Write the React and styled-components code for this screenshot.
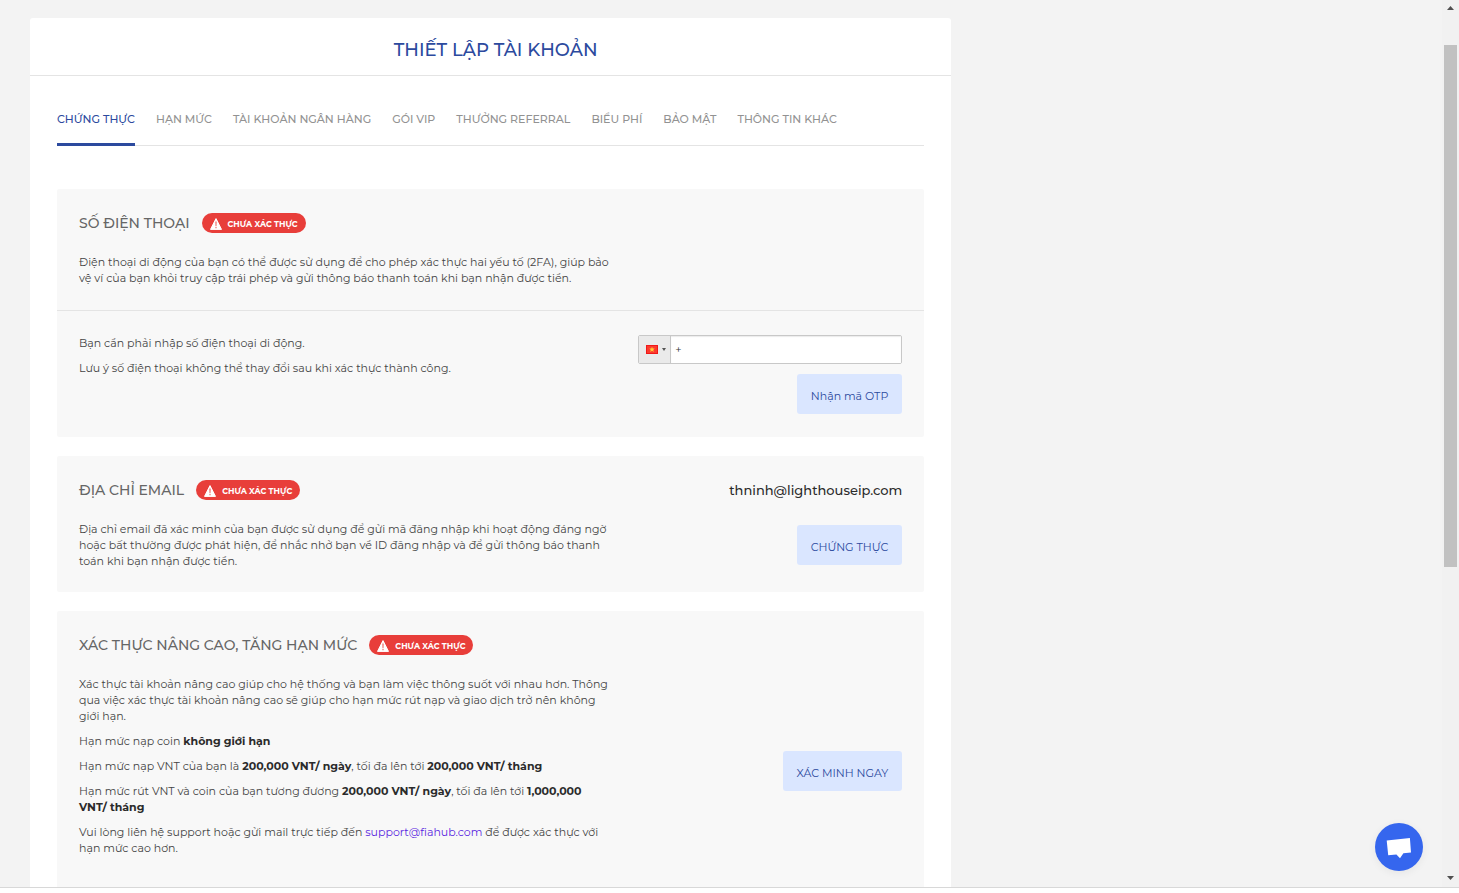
import React, { useState } from "react"
import styled, { createGlobalStyle, css } from "styled-components"

const COLORS = {
  primary: "#2c4a9e",
  danger: "#e83e3a",
  text: "#444",
  strong: "#2b2b2b",
  muted: "#929292",
  heading: "#666",
  page: "#f3f3f3",
  panel: "#f8f8f8",
  line: "#e4e4e4",
  button: "#dae6ff",
  chat: "#3566ee",
}

const TABS = [
  "CHỨNG THỰC",
  "HẠN MỨC",
  "TÀI KHOẢN NGÂN HÀNG",
  "GÓI VIP",
  "THƯỞNG REFERRAL",
  "BIỂU PHÍ",
  "BẢO MẬT",
  "THÔNG TIN KHÁC",
]

const GlobalStyle = createGlobalStyle`
  *,
  *::before,
  *::after {
    box-sizing: border-box;
  }

  body {
    margin: 0;
    background: #fff;
    color: ${COLORS.text};
    font-family: Montserrat, Inter, "Open Sans", sans-serif;
    font-size: 11px;
    line-height: 16px;
  }

  button,
  input,
  select {
    font: inherit;
  }
`

const Frame = styled.div`
  display: flex;
  height: calc(100vh - 5px);
  border-bottom: 1px solid #d8d8d8;
  background: ${COLORS.page};
`

const Viewport = styled.main`
  position: relative;
  flex: 1;
  min-width: 0;
  overflow: hidden;
`

const Column = styled.div`
  width: 66.6667%;
  padding: 18px 10px 0 30px;
`

const Card = styled.section`
  padding-bottom: 27px;
  border-radius: 3px;
  background: #fff;
`

const CardTitle = styled.h1`
  margin: 0;
  padding: 22px 0 15px 10px;
  border-bottom: 1px solid ${COLORS.line};
  color: ${COLORS.primary};
  font-size: 18px;
  font-weight: 500;
  line-height: 20px;
  text-align: center;
`

const CardBody = styled.div`
  padding: 27px 27px 0;
`

const TabList = styled.nav`
  display: flex;
  gap: 21px;
  margin-bottom: 43px;
  box-shadow: inset 0 -1px 0 ${COLORS.line};
`

const Tab = styled.button`
  padding: 8px 0 16px;
  height: 43px;
  border: 0;
  border-bottom: 3px solid transparent;
  background: none;
  color: ${COLORS.muted};
  font-weight: 500;
  white-space: nowrap;
  cursor: pointer;

  ${({ $active }) =>
    $active &&
    css`
      border-color: ${COLORS.primary};
      color: ${COLORS.primary};
    `}
`

const Panel = styled.article`
  margin-bottom: 19px;
  border-radius: 2px;
  background: ${COLORS.panel};
`

const PanelRow = styled.div`
  display: grid;
  grid-template-columns: minmax(0, 1fr) 264px;
  gap: 27px;
  padding: 24px 22px 23px;

  ${({ $divided }) =>
    $divided &&
    css`
      padding-bottom: 24px;
      border-bottom: 1px solid ${COLORS.line};
    `}

  ${({ $tall }) =>
    $tall &&
    css`
      min-height: 318px;
    `}
`

const Heading = styled.div`
  display: flex;
  align-items: center;
  gap: 12px;
  margin-bottom: 21px;

  h2 {
    margin: 0;
    color: ${COLORS.heading};
    font-size: 14px;
    font-weight: 500;
    line-height: 20px;
    white-space: nowrap;
  }
`

const Badge = styled.span`
  display: flex;
  align-items: center;
  gap: 6px;
  height: 20px;
  padding: 2px 8px 0;
  border-radius: 10px;
  background: ${COLORS.danger};
  color: #fff;
  font-size: 8px;
  font-weight: 700;
  white-space: nowrap;
`

const Text = styled.p`
  margin: 0;
  font-weight: 400;

  & + & {
    margin-top: 9px;
  }

  b {
    color: ${COLORS.strong};
    font-weight: 700;
  }

  a {
    color: #5a1fe0;
    text-decoration: none;
  }
`

const Aside = styled.div`
  display: flex;
  flex-direction: column;
  align-items: flex-end;
  justify-content: ${({ $center }) => ($center ? "center" : "flex-start")};
  gap: ${({ $gap }) => $gap || 0}px;
`

const Email = styled.strong`
  color: ${COLORS.strong};
  font-size: 13px;
  font-weight: 500;
  line-height: 20px;
`

const ActionButton = styled.button`
  height: 40px;
  padding: 4px 14px 0;
  border: 0;
  border-radius: 3px;
  background: ${COLORS.button};
  color: ${COLORS.primary};
  font-weight: 400;
  cursor: pointer;
`

const PhoneField = styled.div`
  display: flex;
  width: 100%;
  height: 29px;
  border: 1px solid #c8c8c8;
  border-radius: 2px;
  background: #fff;
  overflow: hidden;

  input {
    flex: 1;
    min-width: 0;
    padding: 0 4px 2px;
    border: 0;
    outline: 0;
    background: #fff;
    box-shadow: inset 0 1px 1px rgba(0, 0, 0, 0.08);
    color: #333;
    font-size: 11px;
  }
`

const Country = styled.div`
  position: relative;
  display: flex;
  align-items: center;
  gap: 4px;
  width: 32px;
  padding-left: 7px;
  border-right: 1px solid #c8c8c8;
  background: #eaeaea;

  select {
    position: absolute;
    inset: 0;
    width: 100%;
    opacity: 0;
    cursor: pointer;
  }
`

const ScrollBar = styled.div`
  display: flex;
  flex-direction: column;
  width: 17px;
  background: #f1f1f1;

  svg {
    flex: none;
    display: block;
  }
`

const ScrollTrack = styled.div`
  flex: 1;
  display: grid;
  grid-template-rows: 28fr 522fr 303fr;
  padding: 0 2px;
`

const ScrollThumb = styled.div`
  grid-row: 2;
  background: #c1c1c1;
`

const ChatButton = styled.button`
  position: absolute;
  right: 19px;
  bottom: 16px;
  width: 48px;
  height: 48px;
  padding: 0;
  border: 0;
  border-radius: 50%;
  background: ${COLORS.chat};
  box-shadow: 0 2px 8px rgba(0, 0, 0, 0.06);
  cursor: pointer;

  svg {
    display: block;
  }
`

const WarningIcon = () => (
  <svg width="12" height="12" viewBox="0 0 12 12" aria-hidden="true">
    <path
      d="M6 0.6 11.5 11.4H0.5Z"
      fill="#fff"
      stroke="#fff"
      strokeWidth="1"
      strokeLinejoin="round"
    />
    <path
      d="M5.3 3.4h1.4l-.2 4.8h-1zM5.4 9h1.2v1.3H5.4z"
      fill={COLORS.danger}
      opacity="0.75"
    />
  </svg>
)

const FlagIcon = () => (
  <svg width="12" height="9" viewBox="0 0 12 9" aria-hidden="true">
    <rect width="12" height="9" fill="#f01818" />
    <rect x="1" y="1" width="10" height="7" fill="#fb3a2e" />
    <path
      d="M6 1.800l.7 1.700h2L7.200 4.900l.6 2L6 5.800 4.200 6.900l.6-2-1.500-1.400h2z"
      fill="#ffd034"
    />
  </svg>
)

const CaretIcon = () => (
  <svg width="4" height="3" viewBox="0 0 4 3" aria-hidden="true">
    <path d="M0 0h4L2 3z" fill="#555" />
  </svg>
)

const UnverifiedBadge = () => (
  <Badge>
    <WarningIcon />
    CHƯA XÁC THỰC
  </Badge>
)

const SectionHeading = ({ children }) => (
  <Heading>
    <h2>{children}</h2>
    <UnverifiedBadge />
  </Heading>
)

function PhonePanel() {
  const [phone, setPhone] = useState("+")

  return (
    <Panel>
      <PanelRow $divided>
        <div>
          <SectionHeading>SỐ ĐIỆN THOẠI</SectionHeading>
          <Text>
            Điện thoại di động của bạn có thể được sử dụng để cho phép xác thực
            hai yếu tố (2FA), giúp bảo vệ ví của bạn khỏi truy cập trái phép và
            gửi thông báo thanh toán khi bạn nhận được tiền.
          </Text>
        </div>
      </PanelRow>
      <PanelRow>
        <div>
          <Text>Bạn cần phải nhập số điện thoại di động.</Text>
          <Text>
            Lưu ý số điện thoại không thể thay đổi sau khi xác thực thành công.
          </Text>
        </div>
        <Aside $gap={10}>
          <PhoneField>
            <Country>
              <FlagIcon />
              <CaretIcon />
              <select aria-label="Quốc gia" defaultValue="vn">
                <option value="vn">VN</option>
              </select>
            </Country>
            <input
              type="tel"
              aria-label="Số điện thoại"
              value={phone}
              onChange={(e) => setPhone(e.target.value)}
            />
          </PhoneField>
          <ActionButton type="button">Nhận mã OTP</ActionButton>
        </Aside>
      </PanelRow>
    </Panel>
  )
}

function EmailPanel() {
  return (
    <Panel>
      <PanelRow>
        <div>
          <SectionHeading>ĐỊA CHỈ EMAIL</SectionHeading>
          <Text>
            Địa chỉ email đã xác minh của bạn được sử dụng để gửi mã đăng nhập
            khi hoạt động đáng ngờ hoặc bất thường được phát hiện, để nhắc nhở
            bạn về ID đăng nhập và để gửi thông báo thanh toán khi bạn nhận được
            tiền.
          </Text>
        </div>
        <Aside $gap={25}>
          <Email>thninh@lighthouseip.com</Email>
          <ActionButton type="button">CHỨNG THỰC</ActionButton>
        </Aside>
      </PanelRow>
    </Panel>
  )
}

function AdvancedPanel() {
  return (
    <Panel>
      <PanelRow $tall>
        <div>
          <SectionHeading>XÁC THỰC NÂNG CAO, TĂNG HẠN MỨC</SectionHeading>
          <Text>
            Xác thực tài khoản nâng cao giúp cho hệ thống và bạn làm việc thông
            suốt với nhau hơn. Thông qua việc xác thực tài khoản nâng cao sẽ
            giúp cho hạn mức rút nạp và giao dịch trở nên không giới hạn.
          </Text>
          <Text>
            Hạn mức nạp coin <b>không giới hạn</b>
          </Text>
          <Text>
            Hạn mức nạp VNT của bạn là <b>200,000 VNT/ ngày</b>, tối đa lên tới{" "}
            <b>200,000 VNT/ tháng</b>
          </Text>
          <Text>
            Hạn mức rút VNT và coin của bạn tương đương{" "}
            <b>200,000 VNT/ ngày</b>, tối đa lên tới{" "}
            <b>1,000,000 VNT/ tháng</b>
          </Text>
          <Text>
            Vui lòng liên hệ support hoặc gửi mail trực tiếp đến{" "}
            <a href="mailto:support@fiahub.com">support@fiahub.com</a> để được
            xác thực với hạn mức cao hơn.
          </Text>
        </div>
        <Aside $center>
          <ActionButton type="button">XÁC MINH NGAY</ActionButton>
        </Aside>
      </PanelRow>
    </Panel>
  )
}

export default function App() {
  const [activeTab, setActiveTab] = useState(TABS[0])

  return (
    <>
      <GlobalStyle />
      <Frame>
        <Viewport>
          <Column>
            <Card>
              <CardTitle>THIẾT LẬP TÀI KHOẢN</CardTitle>
              <CardBody>
                <TabList>
                  {TABS.map((tab) => (
                    <Tab
                      key={tab}
                      type="button"
                      $active={tab === activeTab}
                      onClick={() => setActiveTab(tab)}
                    >
                      {tab}
                    </Tab>
                  ))}
                </TabList>
                <PhonePanel />
                <EmailPanel />
                <AdvancedPanel />
              </CardBody>
            </Card>
          </Column>
          <ChatButton type="button" aria-label="Chat">
            <svg width="48" height="48" viewBox="0 0 48 48" aria-hidden="true">
              <path
                d="M11.700 17.400 34.900 15 36 29.400 28.400 30.200 25 35.200 21.400 31.400 13.200 32.200Z"
                fill="#fff"
              />
            </svg>
          </ChatButton>
        </Viewport>
        <ScrollBar aria-hidden="true">
          <svg width="17" height="17" viewBox="0 0 17 17">
            <path d="M5 10h7L8.500 6z" fill="#505050" />
          </svg>
          <ScrollTrack>
            <ScrollThumb />
          </ScrollTrack>
          <svg width="17" height="17" viewBox="0 0 17 17">
            <path d="M5 6h7L8.500 10z" fill="#505050" />
          </svg>
        </ScrollBar>
      </Frame>
    </>
  )
}
